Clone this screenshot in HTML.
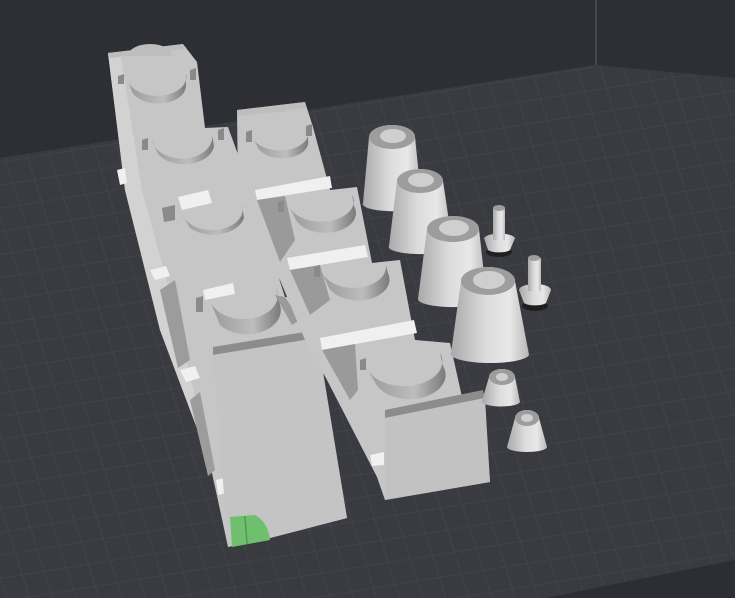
<!DOCTYPE html>
<html><head><meta charset="utf-8"><style>html,body{margin:0;padding:0;background:#2e2f34;overflow:hidden}svg{display:block}</style></head>
<body>
<svg width="735" height="598" viewBox="0 0 735 598" xmlns="http://www.w3.org/2000/svg">
<defs>
<pattern id="g" width="22" height="22" patternUnits="userSpaceOnUse" patternTransform="matrix(1,-0.16,0.32,1,0,0)">
<rect width="22" height="22" fill="#3a3b41"/>
<path d="M0 0H22M0 0V22" stroke="#48494f" stroke-width="1"/>
</pattern>
<linearGradient id="cone" x1="0" x2="1" y1="0" y2="0">
<stop offset="0" stop-color="#a9a9a9"/><stop offset="0.45" stop-color="#dcdcdc"/><stop offset="0.75" stop-color="#e8e8e8"/><stop offset="1" stop-color="#b8b8b8"/>
</linearGradient>
<linearGradient id="cup" x1="0" x2="1" y1="0" y2="0">
<stop offset="0" stop-color="#9a9a9a"/><stop offset="0.6" stop-color="#bdbdbd"/><stop offset="1" stop-color="#7a7a7a"/>
</linearGradient>
</defs>
<rect width="735" height="598" fill="#2e2f34"/>
<!-- floor -->
<polygon points="0,158 595,65 735,78 735,598 0,598" fill="url(#g)"/>
<line x1="596" y1="0" x2="596" y2="65" stroke="#46474c" stroke-width="2"/>
<polygon points="545,598 735,560 735,598" fill="#2d2e33"/>

<!-- left group -->
<polygon points="108,53 183,44 197,62 205,128 228,127 240,160 245,190 255,197 270,250 285,297 292,297 317,335 347,518 270,538 228,547 210,463 160,330 125,190" fill="#c6c6c6"/>
<polygon points="108,53 120,52 142,190 180,330 228,545 210,463 160,330 125,190" fill="#d2d2d2"/>
<polygon points="108,53 183,44 184,49 110,58" fill="#bdbdbd"/>
<!-- white strips & shadows on left side -->
<polygon points="117,170 120,185 127,183 125,168" fill="#f0f0f0"/>
<polygon points="150,270 155,280 170,276 166,266" fill="#f0f0f0"/>
<polygon points="180,370 186,382 200,378 195,366" fill="#f0f0f0"/>
<polygon points="216,480 218,495 226,493 224,478" fill="#f0f0f0"/>
<polygon points="160,290 175,280 190,360 178,368" fill="#9c9c9c"/>
<polygon points="190,400 200,392 215,470 208,476" fill="#9c9c9c"/>
<!-- cups left group -->
<g>
<path d="M128,56 A22,12 0 0 1 172,56 Z" fill="#bdbdbd"/>
<path d="M118,76 L124,74 L124,84 L118,84 Z M190,70 L196,68 L196,80 L190,80 Z" fill="#8a8a8a"/>
<path d="M128,80 A28,18 0 0 0 186,74 L186,84 A28,18 0 0 1 132,92 Z" fill="url(#cup)"/>
<path d="M142,140 L148,138 L148,150 L142,150 Z M218,130 L224,128 L224,140 L218,140 Z" fill="#8a8a8a"/>
<path d="M152,140 A28,20 0 0 0 212,134 L214,146 A30,20 0 0 1 158,154 Z" fill="url(#cup)"/>
<path d="M162,208 L175,205 L175,220 L164,222 Z" fill="#8a8a8a"/>
<polygon points="178,197 208,190 212,203 182,210" fill="#f0f0f0"/>
<path d="M182,214 A30,20 0 0 0 242,205 L244,218 A32,22 0 0 1 190,228 Z" fill="url(#cup)"/>
<polygon points="203,290 233,283 235,294 205,300" fill="#f0f0f0"/>
<path d="M196,298 L203,296 L203,312 L196,312 Z" fill="#8a8a8a"/>
<path d="M211,303 A32,22 0 0 0 276,288 L280,305 A34,24 0 0 1 220,325 Z" fill="url(#cup)"/>
<polygon points="275,295 285,297 300,320 292,325" fill="#9a9a9a"/>
<polygon points="213,347 317,330 317,338 213,355" fill="#8c8c8c"/>
</g>
<!-- front panel -->
<polygon points="213,355 317,338 347,518 270,538 228,545" fill="#c4c4c4"/>
<path d="M230,517 L255,515 Q268,522 270,540 L232,547 Z" fill="#6fbf6f"/>
<line x1="245" y1="516" x2="247" y2="544" stroke="#4e9a4e" stroke-width="1.5"/>

<!-- middle group -->
<polygon points="237,110 305,102 313,127 330,190 357,187 372,263 400,260 415,340 450,343 462,397 483,393 490,482 385,500 377,477 327,380 305,340 280,280 250,230 238,190" fill="#c6c6c6"/>
<polygon points="237,110 305,102 306,108 238,116" fill="#bdbdbd"/>
<path d="M256,113 A16,9 0 0 1 286,112 Z" fill="#bdbdbd"/>
<path d="M246,132 L252,130 L252,142 L246,142 Z M306,126 L312,124 L312,136 L306,136 Z" fill="#8a8a8a"/>
<path d="M252,136 A26,16 0 0 0 308,130 L308,140 A26,16 0 0 1 258,148 Z" fill="url(#cup)"/>
<polygon points="255,190 330,176 332,188 257,200" fill="#f0f0f0"/>
<polygon points="257,200 285,196 295,240 280,262" fill="#9a9a9a"/>
<path d="M278,202 L284,200 L284,212 L278,212 Z" fill="#8a8a8a"/>
<path d="M290,208 A26,16 0 0 0 352,195 L354,206 A28,18 0 0 1 296,220 Z" fill="url(#cup)"/>
<polygon points="287,258 365,245 368,257 290,270" fill="#f0f0f0"/>
<polygon points="290,270 320,265 330,300 310,315" fill="#9a9a9a"/>
<path d="M314,267 L320,265 L320,277 L314,277 Z" fill="#8a8a8a"/>
<path d="M322,272 A28,18 0 0 0 385,262 L388,273 A30,20 0 0 1 328,286 Z" fill="url(#cup)"/>
<polygon points="320,338 414,320 417,333 322,350" fill="#f0f0f0"/>
<polygon points="322,350 355,344 358,390 350,400" fill="#9a9a9a"/>
<path d="M360,360 L366,358 L366,370 L360,370 Z" fill="#8a8a8a"/>
<path d="M368,370 A28,18 0 0 0 440,353 L443,366 A30,20 0 0 1 376,384 Z" fill="url(#cup)"/>
<polygon points="385,410 483,390 485,398 385,418" fill="#8c8c8c"/>
<polygon points="370,455 384,452 384,465 372,466" fill="#f0f0f0"/>
<polygon points="385,418 485,398 490,482 385,500" fill="#c2c2c2"/>

<!-- large cones -->
<g>
<path d="M369,137 A23,12 0 0 1 415,137 L422,205 A29,7 0 0 1 363,203 Z" fill="url(#cone)"/>
<ellipse cx="392" cy="137" rx="23" ry="12" fill="#9d9d9d"/>
<ellipse cx="393" cy="136" rx="13" ry="7" fill="#cfcfcf"/>
<path d="M397,181 A23,12 0 0 1 443,181 L453,248 A32,7 0 0 1 389,246 Z" fill="url(#cone)"/>
<ellipse cx="420" cy="181" rx="23" ry="12" fill="#9d9d9d"/>
<ellipse cx="421" cy="180" rx="13" ry="7" fill="#cfcfcf"/>
<path d="M427,229 A26,13 0 0 1 479,229 L487,301 A35,8 0 0 1 418,299 Z" fill="url(#cone)"/>
<ellipse cx="453" cy="229" rx="26" ry="13" fill="#9d9d9d"/>
<ellipse cx="454" cy="228" rx="15" ry="8" fill="#cfcfcf"/>
<path d="M461,281 A27,14 0 0 1 515,281 L529,355 A39,9 0 0 1 451,353 Z" fill="url(#cone)"/>
<ellipse cx="488" cy="281" rx="27" ry="14" fill="#9d9d9d"/>
<ellipse cx="489" cy="280" rx="16" ry="9" fill="#cfcfcf"/>
</g>
<!-- pins -->
<g>
<ellipse cx="499" cy="252" rx="13" ry="5" fill="#1f1f22"/>
<path d="M484,238 A16,6 0 0 1 515,238 L510,250 A12,4 0 0 1 488,250 Z" fill="url(#cone)"/>
<rect x="493" y="208" width="12" height="32" fill="url(#cone)"/>
<ellipse cx="499" cy="208" rx="6" ry="3" fill="#9d9d9d"/>
<ellipse cx="535" cy="306" rx="13" ry="5" fill="#1f1f22"/>
<path d="M519,290 A16,6 0 0 1 551,290 L546,303 A12,4 0 0 1 524,303 Z" fill="url(#cone)"/>
<rect x="528" y="258" width="13" height="33" fill="url(#cone)"/>
<ellipse cx="534" cy="258" rx="6" ry="3" fill="#9d9d9d"/>
</g>
<!-- small cones -->
<g>
<path d="M489,377 A13,8 0 0 1 515,377 L520,402 A19,5 0 0 1 482,401 Z" fill="url(#cone)"/>
<ellipse cx="502" cy="377" rx="13" ry="8" fill="#9d9d9d"/>
<ellipse cx="502" cy="377" rx="6" ry="4" fill="#cfcfcf"/>
<path d="M515,418 A12,8 0 0 1 539,418 L547,447 A20,5 0 0 1 507,447 Z" fill="url(#cone)"/>
<ellipse cx="527" cy="418" rx="12" ry="8" fill="#9d9d9d"/>
<ellipse cx="527" cy="418" rx="6" ry="4" fill="#cfcfcf"/>
</g>
</svg>
</body></html>
